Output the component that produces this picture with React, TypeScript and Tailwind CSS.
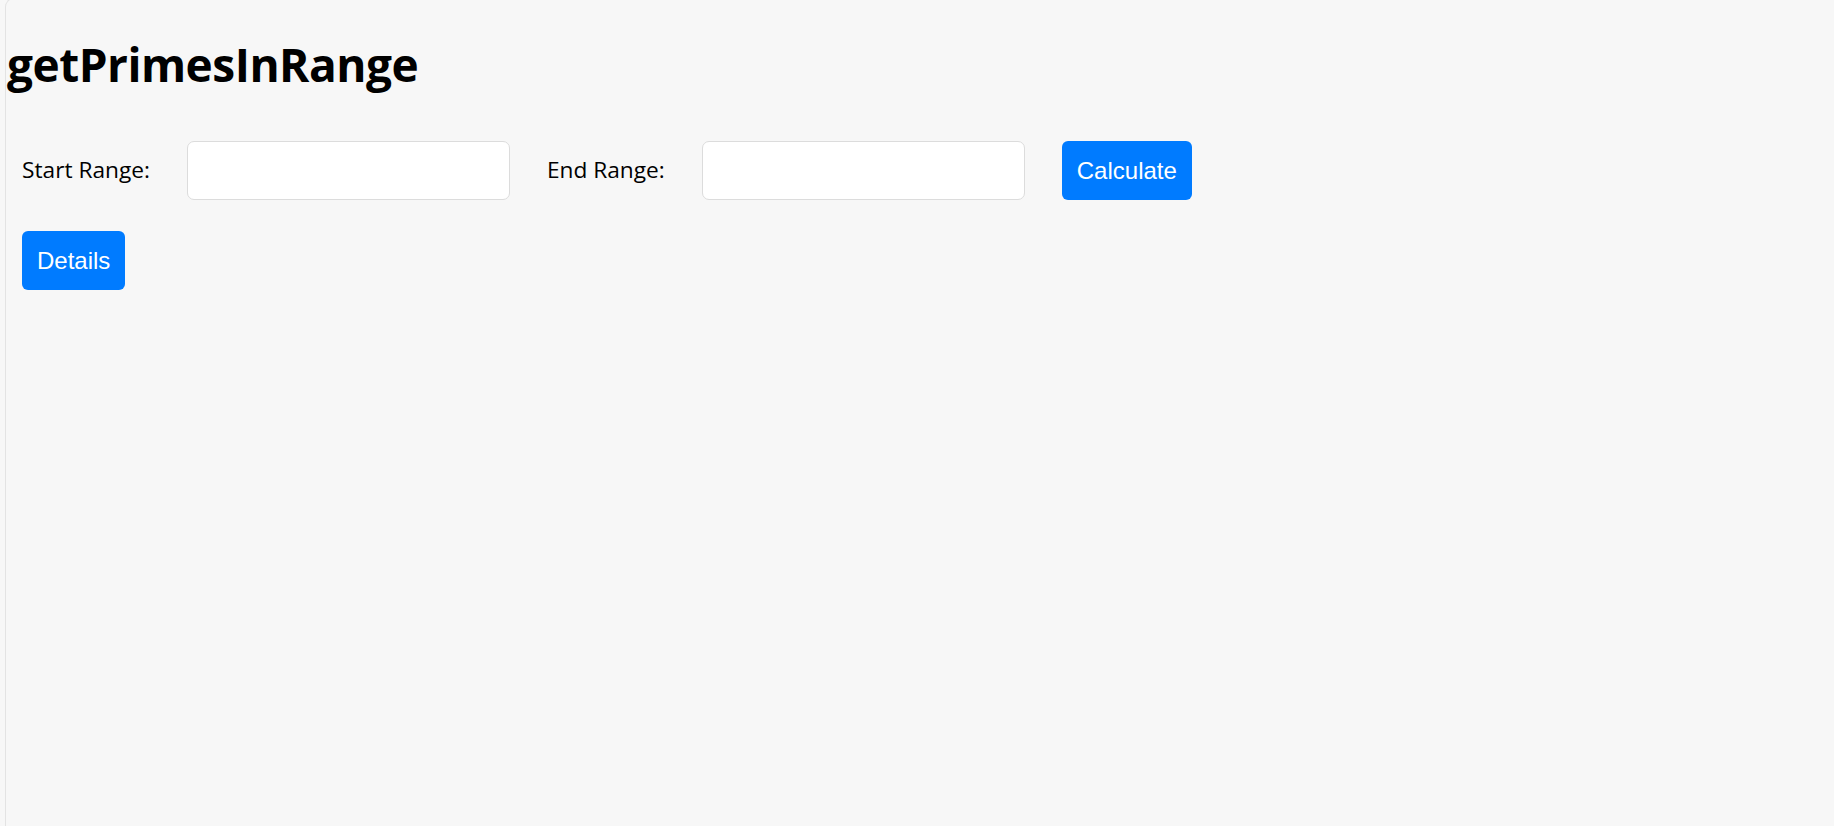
export default function App() {
  return (
    <div className="min-h-screen w-full bg-[#f7f7f7] pl-[5px] overflow-hidden">
      <div className="-mt-[2px] min-h-[830px] border-l-[1.5px] border-t-[1.5px] border-[#e3e3e3] rounded-tl-[9px] pl-[1px] font-['Open_Sans',sans-serif] text-black">
        <h1 className="pt-[37px] text-[46px] leading-[56px] font-bold tracking-[-0.5px]">
          getPrimesInRange
        </h1>

        <div className="mt-[49px] pl-[15px] flex items-center gap-[37px]">
          <label className="text-[22.7px] leading-none">Start Range:</label>
          <input
            type="number"
            className="w-[323px] h-[59px] bg-white border-[1.5px] border-[#dcdcdc] rounded-[7px] outline-none"
          />
          <label className="text-[22.7px] leading-none">End Range:</label>
          <input
            type="number"
            className="w-[323px] h-[59px] bg-white border-[1.5px] border-[#dcdcdc] rounded-[7px] outline-none"
          />
          <button className="h-[59px] px-[15px] bg-[#007bff] text-white rounded-[6px] text-[24px] font-['Liberation_Sans',Arial,sans-serif]">
            Calculate
          </button>
        </div>

        <div className="mt-[31px] pl-[15px]">
          <button className="h-[59px] px-[15px] bg-[#007bff] text-white rounded-[6px] text-[24px] font-['Liberation_Sans',Arial,sans-serif]">
            Details
          </button>
        </div>
      </div>
    </div>
  );
}
